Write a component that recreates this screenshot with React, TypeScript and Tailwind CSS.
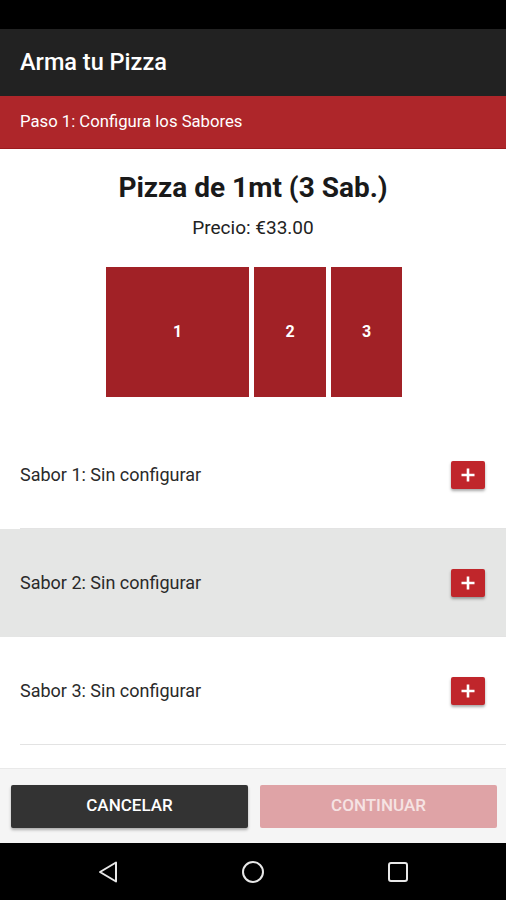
import React from "react";

const sabores = [
  { label: "Sabor 1: Sin configurar", active: false },
  { label: "Sabor 2: Sin configurar", active: true },
  { label: "Sabor 3: Sin configurar", active: false },
];

function PlusButton() {
  return (
    <button className="flex h-[28px] w-[34px] items-center justify-center rounded-[2px] bg-[#c0262b] shadow-[0_2px_3px_rgba(0,0,0,0.35)]">
      <svg width="16" height="16" viewBox="0 0 16 16">
        <path d="M8 1.5v13M1.5 8h13" stroke="#fff" strokeWidth="2.6" />
      </svg>
    </button>
  );
}

export default function App() {
  return (
    <div className="flex h-[900px] w-[506px] flex-col bg-white font-['Roboto',sans-serif]">
      <div className="h-[29px] bg-black" />
      <header className="flex h-[67px] items-center bg-[#222222] px-5">
        <h1 className="text-[23.5px] font-medium text-white">Arma tu Pizza</h1>
      </header>
      <div className="flex h-[53px] items-center border-b border-[#9c1a1d] bg-[#ae262a] px-5">
        <span className="text-[16.7px] text-white">Paso 1: Configura los Sabores</span>
      </div>

      <main className="flex flex-1 flex-col">
        <h2 className="mt-[23px] text-center text-[28px] font-bold leading-[32px] text-[#1a1a1a]">
          Pizza de 1mt (3 Sab.)
        </h2>
        <p className="mt-[12px] text-center text-[19px] leading-[24px] text-[#222]">Precio: €33.00</p>

        <div className="mt-[27px] flex justify-center gap-[5px] pl-[2px]">
          <div className="flex h-[130px] w-[143px] items-center justify-center bg-[#a12126] text-[16px] font-bold text-white">1</div>
          <div className="flex h-[130px] w-[72px] items-center justify-center bg-[#a12126] text-[16px] font-bold text-white">2</div>
          <div className="flex h-[130px] w-[71px] items-center justify-center bg-[#a12126] text-[16px] font-bold text-white">3</div>
        </div>

        <ul className="mt-[24px]">
          {sabores.map((s) => (
            <li key={s.label} className={s.active ? "bg-[#e5e6e5]" : "bg-white"}>
              <div className="flex h-[107px] items-center justify-between pl-5 pr-[21px]">
                <span className="text-[18px] text-[#2a2a2a]">{s.label}</span>
                <PlusButton />
              </div>
              <div className="ml-5 h-px bg-[#e3e3e3]" />
            </li>
          ))}
        </ul>
      </main>

      <footer className="flex h-[75px] items-center gap-3 border-t border-[#e9e9e9] bg-[#f5f5f5] pl-[11px] pr-[9px]">
        <button className="h-[43px] flex-1 rounded-[2px] bg-[#333333] text-[17px] font-medium text-white shadow-[0_2px_3px_rgba(0,0,0,0.3)]">
          CANCELAR
        </button>
        <button className="h-[43px] flex-1 rounded-[2px] bg-[#dfa3a6] text-[17px] font-medium text-[#f6e3e3]">
          CONTINUAR
        </button>
      </footer>

      <nav className="flex h-[57px] items-center justify-center gap-[122px] bg-black">
        <svg width="22" height="22" viewBox="0 0 22 22">
          <path d="M19 1.5v19L3 11z" fill="none" stroke="#e8e8e8" strokeWidth="2" strokeLinejoin="round" />
        </svg>
        <svg width="24" height="24" viewBox="0 0 24 24">
          <circle cx="12" cy="12" r="10" fill="none" stroke="#e8e8e8" strokeWidth="2" />
        </svg>
        <svg width="22" height="22" viewBox="0 0 22 22">
          <rect x="2" y="2" width="18" height="18" rx="2" fill="none" stroke="#e8e8e8" strokeWidth="2" />
        </svg>
      </nav>
    </div>
  );
}
